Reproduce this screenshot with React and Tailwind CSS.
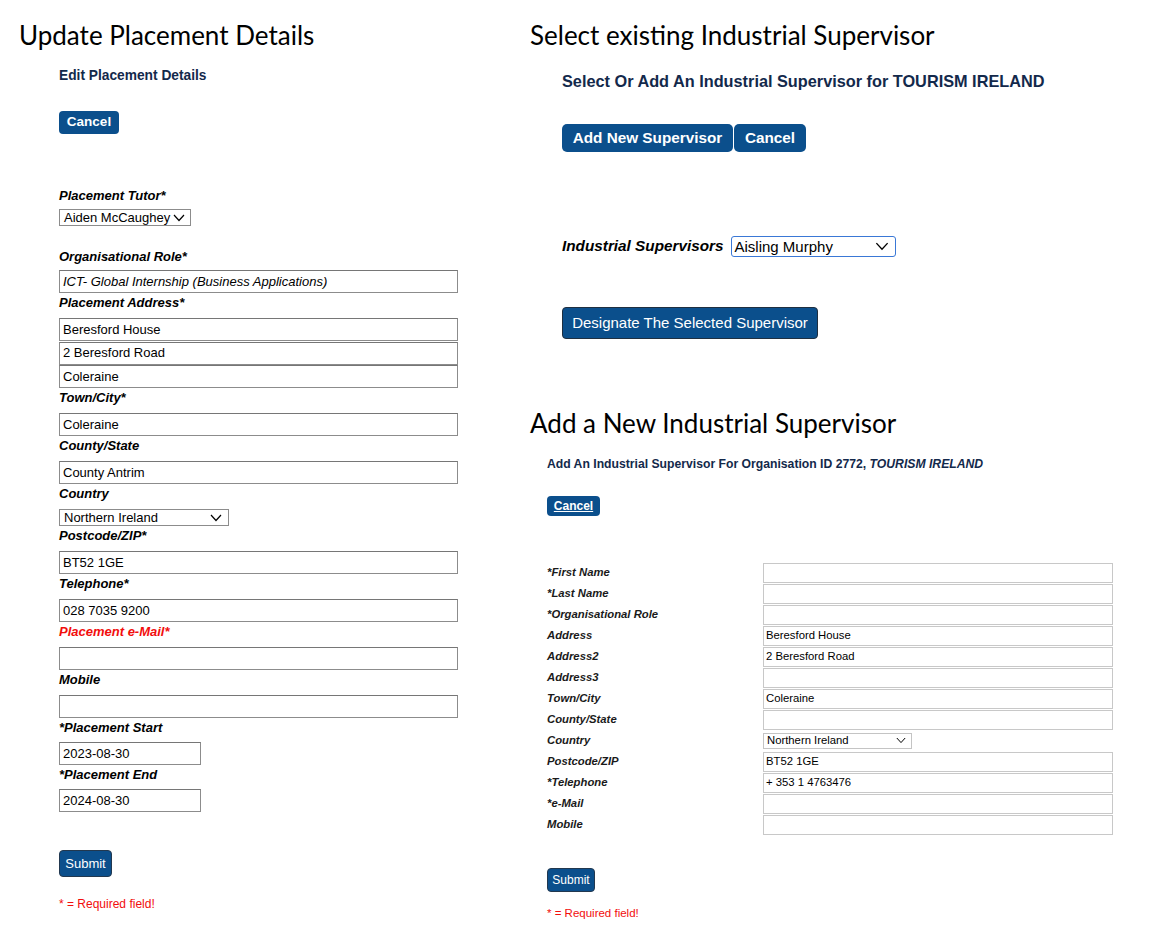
import React from 'react';

const ARIAL = { fontFamily: '"Liberation Sans", Arial, sans-serif' };
const TITLE = { fontFamily: 'Lato, "Open Sans", sans-serif' };

const Chevron = ({ className }) => (
  <svg viewBox="0 0 12 8" className={className} fill="none" stroke="currentColor" strokeWidth="1.2">
    <polyline points="1,1 6,6.5 11,1" />
  </svg>
);

const FakeSelect = ({ value, className, textClass = 'text-[13px]', chevron = 'w-[12px] h-[8px]' }) => (
  <div className={`flex items-center justify-between bg-white text-black ${className}`}>
    <span className={`${textClass} leading-none`}>{value}</span>
    <Chevron className={chevron} />
  </div>
);

const Label = ({ children, red, h = 'h-[25px]' }) => (
  <div className={`${h} pt-[2px] text-[13px] leading-[15px] font-bold italic ${red ? 'text-[#f20d0d]' : 'text-black'}`}>
    {children}
  </div>
);

const Input = ({ value, italic, w = 'w-[399px]' }) => (
  <div className={`${w} h-[23px] border border-[#8c8c8c] border-t-[#767676] bg-white px-[3px] flex items-center text-[13px] text-black ${italic ? 'italic' : ''}`}>
    {value}
  </div>
);

const UpdatePlacement = () => (
  <div className="w-[530px] shrink-0 pl-[19px]">
    <div className="mt-[18px] h-[34px] text-[26px] leading-[34px] text-black" style={TITLE}>
      Update Placement Details
    </div>
    <div className="pl-[40px]" style={ARIAL}>
      <div className="mt-[16px] text-[13.75px] leading-[15px] font-bold text-[#13294b]">Edit Placement Details</div>
      <button className="mt-[28px] w-[60px] h-[23px] rounded-[4px] bg-[#0b4f8c] text-white text-[13.5px] font-bold">Cancel</button>

      <div className="mt-[53px]">
        <div className="h-[22px] pt-[1px] text-[13px] leading-[15px] font-bold italic">Placement Tutor*</div>
        <FakeSelect value="Aiden McCaughey" className="w-[132px] h-[17px] border border-[#8c8c8c] pl-[4px] pr-[5px]" />
      </div>

      <div className="mt-[22px]">
        <div className="h-[22px] pt-[1px] text-[13px] leading-[15px] font-bold italic">Organisational Role*</div>
        <Input value="ICT- Global Internship (Business Applications)" italic />
      </div>

      <Label>Placement Address*</Label>
      <div className="flex flex-col gap-[0.5px]">
        <Input value="Beresford House" />
        <Input value="2 Beresford Road" />
        <Input value="Coleraine" />
      </div>

      <Label>Town/City*</Label>
      <Input value="Coleraine" />
      <Label>County/State</Label>
      <Input value="County Antrim" />
      <Label>Country</Label>
      <FakeSelect value="Northern Ireland" className="w-[170px] h-[17px] border border-[#8c8c8c] pl-[4px] pr-[6px]" />
      <Label>Postcode/ZIP*</Label>
      <Input value="BT52 1GE" />
      <Label>Telephone*</Label>
      <Input value="028 7035 9200" />
      <Label red>Placement e-Mail*</Label>
      <Input value="" />
      <Label>Mobile</Label>
      <Input value="" />
      <Label h="h-[24px]">*Placement Start</Label>
      <Input value="2023-08-30" w="w-[142px]" />
      <Label h="h-[24px]">*Placement End</Label>
      <Input value="2024-08-30" w="w-[142px]" />

      <button className="mt-[38px] w-[53px] h-[27px] rounded-[4px] bg-[#0b4f8c] border border-[#22384f] text-white text-[13px]">Submit</button>
      <div className="mt-[20px] text-[12px] leading-[14px] text-[#f20d0d]">* = Required field!</div>
    </div>
  </div>
);

const SelectExisting = () => (
  <div>
    <div className="mt-[18px] h-[34px] text-[26px] leading-[34px] text-black" style={TITLE}>
      Select existing Industrial Supervisor
    </div>
    <div className="pl-[32px]" style={ARIAL}>
      <div className="mt-[20px] text-[16.3px] leading-[19px] font-bold text-[#13294b]">
        Select Or Add An Industrial Supervisor for TOURISM IRELAND
      </div>
      <div className="mt-[33px] flex gap-[1px]">
        <button className="w-[171px] h-[28px] rounded-[5px] bg-[#0b4f8c] text-white text-[15.3px] font-bold">Add New Supervisor</button>
        <button className="w-[72px] h-[28px] rounded-[5px] bg-[#0b4f8c] text-white text-[15.3px] font-bold">Cancel</button>
      </div>
      <div className="mt-[83px] flex items-center gap-[7px]">
        <span className="text-[15.3px] font-bold italic text-black">Industrial Supervisors</span>
        <FakeSelect
          value="Aisling Murphy"
          textClass="text-[15px]"
          chevron="w-[14px] h-[9px]"
          className="w-[165px] h-[21px] border-[1.5px] border-[#3a78d6] rounded-[3px] pl-[3px] pr-[6px]"
        />
      </div>
      <button className="mt-[49px] w-[256px] h-[32px] rounded-[4px] bg-[#0b4f8c] border border-[#1f2f40] text-white text-[15px]">
        Designate The Selected Supervisor
      </button>
    </div>
  </div>
);

const rows = [
  ['*First Name', ''],
  ['*Last Name', ''],
  ['*Organisational Role', ''],
  ['Address', 'Beresford House'],
  ['Address2', '2 Beresford Road'],
  ['Address3', ''],
  ['Town/City', 'Coleraine'],
  ['County/State', ''],
  ['Country', null],
  ['Postcode/ZIP', 'BT52 1GE'],
  ['*Telephone', '+ 353 1 4763476'],
  ['*e-Mail', ''],
  ['Mobile', ''],
];

const AddNew = () => (
  <div>
    <div className="mt-[67px] h-[34px] text-[26px] leading-[34px] text-black" style={TITLE}>
      Add a New Industrial Supervisor
    </div>
    <div className="pl-[17px]" style={ARIAL}>
      <div className="mt-[17px] text-[12.2px] leading-[14px] font-bold text-[#13294b]">
        Add An Industrial Supervisor For Organisation ID 2772, <span className="italic">TOURISM IRELAND</span>
      </div>
      <button className="mt-[25px] w-[53px] h-[20px] rounded-[4px] bg-[#0b4f8c] text-white text-[12px] font-bold underline">Cancel</button>
      <div className="mt-[46px] flex flex-col gap-[1px]">
        {rows.map(([label, value]) => (
          <div key={label} className="flex items-center h-[20px]">
            <div className="w-[216px] text-[11.3px] font-bold italic text-[#1a1a1a]">{label}</div>
            {value === null ? (
              <FakeSelect
                value="Northern Ireland"
                textClass="text-[11.3px]"
                chevron="w-[10px] h-[7px]"
                className="w-[149px] h-[16px] border border-[#c4c4c4] pl-[3px] pr-[5px]"
              />
            ) : (
              <div className="w-[350px] h-[20px] border-[1.5px] border-[#c8c8c8] bg-white px-[2px] flex items-center text-[11.3px] text-black">
                {value}
              </div>
            )}
          </div>
        ))}
      </div>
      <button className="mt-[33px] w-[48px] h-[24px] rounded-[4px] bg-[#0b4f8c] border border-[#22384f] text-white text-[12px]">Submit</button>
      <div className="mt-[15px] text-[11.5px] leading-[13px] text-[#f20d0d]">* = Required field!</div>
    </div>
  </div>
);

export default function App() {
  return (
    <div className="w-[1154px] h-[946px] bg-white flex overflow-hidden">
      <UpdatePlacement />
      <div className="flex flex-col">
        <SelectExisting />
        <AddNew />
      </div>
    </div>
  );
}
